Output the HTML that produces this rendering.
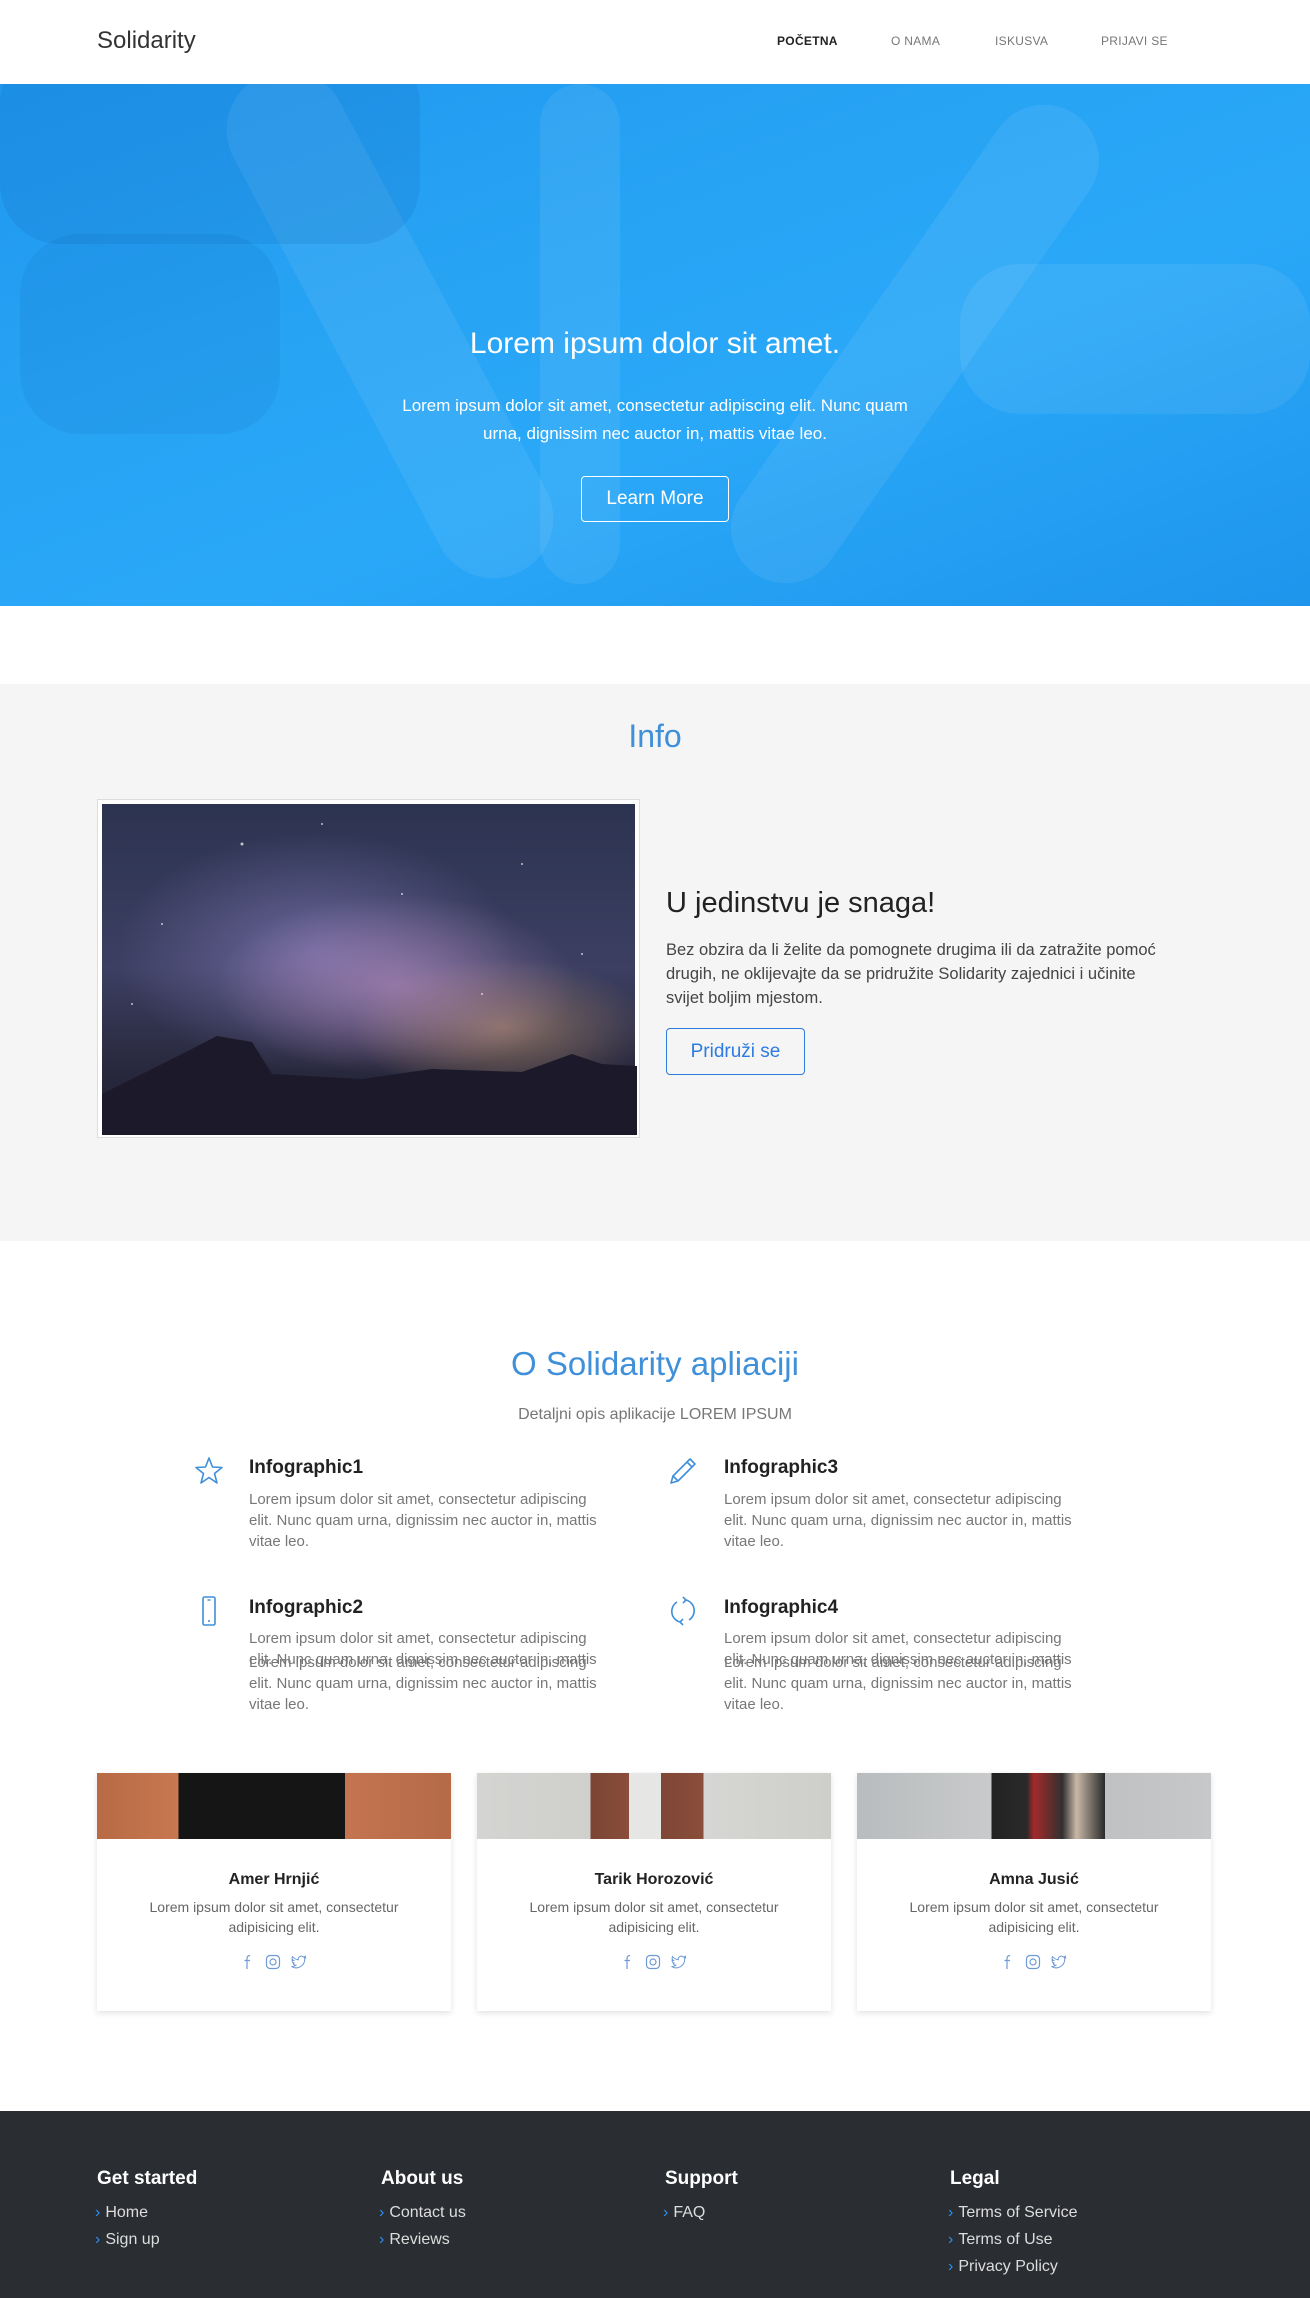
<!DOCTYPE html>
<html><head><meta charset="utf-8">
<style>
*{margin:0;padding:0;box-sizing:border-box}
body{width:1310px;height:2298px;font-family:"Liberation Sans",sans-serif;background:#fff;position:relative;overflow:hidden;color:#333}
.abs{position:absolute}
.nav{top:0;left:0;width:1310px;height:84px;background:#fff}
.logo{left:97px;top:27px;font-size:24px;color:#333}
.nl{top:34px;font-size:12px;color:#777;letter-spacing:.3px}
.hero{top:84px;left:0;width:1310px;height:522px;background:linear-gradient(160deg,#1f97ee 0%,#27a3f4 35%,#2aa8f8 60%,#1d95ec 100%);overflow:hidden}
.hero .s{position:absolute;background:rgba(255,255,255,.07);border-radius:60px}
.gray{top:684px;left:0;width:1310px;height:557px;background:#f5f5f5}
.c{text-align:center;width:1310px;left:0}
.ic{width:30px;height:30px}
.it{font-size:19px;font-weight:bold;color:#222}
.ip{font-size:15px;line-height:21px;color:#777;white-space:nowrap}
.card{top:1773px;width:354px;height:238px;background:#fff;box-shadow:0 2px 6px rgba(0,0,0,.12);text-align:center}
.card .im{height:66px;width:100%}
.card h4{margin-top:32px;font-size:16px;color:#222;font-weight:bold}
.card p{margin-top:8px;font-size:14px;line-height:20px;color:#666;padding:0 40px}
.soc{margin-top:17px;display:flex;justify-content:center;gap:10px}
.foot{top:2111px;left:0;width:1310px;height:187px;background:#2a2d31}
.fh{top:2168px;font-size:19px;font-weight:bold;color:#fff}
.fl{font-size:16px;color:#ddd;line-height:27px}
.fl b{color:#2d8ff0;font-weight:normal;margin-right:5px}
</style></head><body>
<div class="abs nav"></div>
<div class="abs logo">Solidarity</div>
<div class="abs nl" style="left:777px;color:#222;font-weight:bold">POČETNA</div>
<div class="abs nl" style="left:891px">O NAMA</div>
<div class="abs nl" style="left:995px">ISKUSVA</div>
<div class="abs nl" style="left:1101px">PRIJAVI SE</div>

<div class="abs hero">
<div class="s" style="left:330px;top:-40px;width:120px;height:560px;transform:rotate(-28deg)"></div>
<div class="s" style="left:860px;top:-20px;width:110px;height:560px;transform:rotate(35deg)"></div>
<div class="s" style="left:540px;top:0;width:80px;height:500px"></div>
<div class="s" style="left:960px;top:180px;width:350px;height:150px"></div>
<div class="s" style="left:20px;top:150px;width:260px;height:200px;background:rgba(0,40,120,.06)"></div>
<div class="s" style="left:0;top:-40px;width:420px;height:200px;background:rgba(0,40,120,.08)"></div>
</div>
<div class="abs c" style="top:327px;font-size:30px;color:#fff">Lorem ipsum dolor sit amet.</div>
<div class="abs c" style="top:392px;font-size:17px;line-height:28px;color:#fff">Lorem ipsum dolor sit amet, consectetur adipiscing elit. Nunc quam<br>urna, dignissim nec auctor in, mattis vitae leo.</div>
<div class="abs" style="left:581px;top:476px;width:148px;height:46px;border:1px solid #fff;border-radius:4px;color:#fff;font-size:19px;text-align:center;line-height:44px">Learn More</div>

<div class="abs gray"></div>
<div class="abs c" style="top:718px;font-size:32px;color:#3f8fd9">Info</div>
<div class="abs" style="left:97px;top:799px;width:543px;height:339px;background:#fff;border:1px solid #ddd;padding:4px">
<div style="width:100%;height:100%;background:radial-gradient(ellipse 180px 90px at 55% 55%,rgba(200,150,200,.55),transparent),radial-gradient(ellipse 150px 70px at 75% 68%,rgba(220,170,120,.5),transparent),radial-gradient(ellipse 200px 120px at 40% 45%,rgba(150,140,210,.5),transparent),linear-gradient(180deg,#2c3350 0%,#3c3f62 50%,#2a2a40 78%,#1e1e2e 100%);position:relative">
<svg width="535" height="331" style="position:absolute;left:0;top:0"><polygon points="0,290 60,260 80,250 115,232 150,238 170,270 260,275 330,265 420,268 470,250 500,260 535,262 535,331 0,331" fill="#1c1a2a"/><g fill="#fff" opacity=".7"><circle cx="140" cy="40" r="1.5"/><circle cx="300" cy="90" r="1"/><circle cx="60" cy="120" r="1"/><circle cx="420" cy="60" r="1"/><circle cx="480" cy="150" r="1"/><circle cx="220" cy="20" r="1"/><circle cx="30" cy="200" r="1"/><circle cx="380" cy="190" r="1"/></g></svg>
</div></div>
<div class="abs" style="left:666px;top:887px;font-size:29px;color:#222">U jedinstvu je snaga!</div>
<div class="abs" style="left:666px;top:938px;font-size:16.5px;line-height:24px;color:#444;white-space:nowrap">Bez obzira da li želite da pomognete drugima ili da zatražite pomoć<br>drugih, ne oklijevajte da se pridružite Solidarity zajednici i učinite<br>svijet boljim mjestom.</div>
<div class="abs" style="left:666px;top:1028px;width:139px;height:47px;border:1px solid #2d7be0;border-radius:4px;color:#2d7be0;font-size:19px;text-align:center;line-height:45px">Pridruži se</div>

<div class="abs c" style="top:1345px;font-size:33px;color:#3f8fd9">O Solidarity apliaciji</div>
<div class="abs c" style="top:1406px;font-size:16px;color:#777">Detaljni opis aplikacije LOREM IPSUM</div>

<svg class="abs ic" style="left:194px;top:1456px" viewBox="0 0 30 30"><polygon points="15,2 18.5,11 28,11.5 20.5,17.5 23,27 15,21.5 7,27 9.5,17.5 2,11.5 11.5,11" fill="none" stroke="#3f8fd9" stroke-width="1.6" stroke-linejoin="round"/></svg>
<div class="abs it" style="left:249px;top:1457px">Infographic1</div>
<div class="abs ip" style="left:249px;top:1489px">Lorem ipsum dolor sit amet, consectetur adipiscing<br>elit. Nunc quam urna, dignissim nec auctor in, mattis<br>vitae leo.</div>

<svg class="abs ic" style="left:668px;top:1456px" viewBox="0 0 30 30"><path d="M22 3l5 5L10 25l-7 2 2-7z M19 6l5 5 M5 20l5 5" fill="none" stroke="#3f8fd9" stroke-width="1.6" stroke-linejoin="round"/></svg>
<div class="abs it" style="left:724px;top:1457px">Infographic3</div>
<div class="abs ip" style="left:724px;top:1489px">Lorem ipsum dolor sit amet, consectetur adipiscing<br>elit. Nunc quam urna, dignissim nec auctor in, mattis<br>vitae leo.</div>

<svg class="abs ic" style="left:194px;top:1596px" viewBox="0 0 30 30"><rect x="9" y="1" width="12" height="28" rx="1.5" fill="none" stroke="#3f8fd9" stroke-width="1.6"/><circle cx="15" cy="25" r="1" fill="#3f8fd9"/><line x1="13.5" y1="4" x2="16.5" y2="4" stroke="#3f8fd9" stroke-width="1.4"/></svg>
<div class="abs it" style="left:249px;top:1597px">Infographic2</div>
<div class="abs ip" style="left:249px;top:1628px">Lorem ipsum dolor sit amet, consectetur adipiscing<br>elit. Nunc quam urna, dignissim nec auctor in, mattis</div>
<div class="abs ip" style="left:249px;top:1652px">Lorem ipsum dolor sit amet, consectetur adipiscing<br>elit. Nunc quam urna, dignissim nec auctor in, mattis<br>vitae leo.</div>

<svg class="abs ic" style="left:668px;top:1596px" viewBox="0 0 30 30"><path d="M9 6A11 11 0 0 0 12 26 M21 24A11 11 0 0 0 18 4 M15 1l3 3-3 3 M15 29l-3-3 3-3" fill="none" stroke="#3f8fd9" stroke-width="1.6"/></svg>
<div class="abs it" style="left:724px;top:1597px">Infographic4</div>
<div class="abs ip" style="left:724px;top:1628px">Lorem ipsum dolor sit amet, consectetur adipiscing<br>elit. Nunc quam urna, dignissim nec auctor in, mattis</div>
<div class="abs ip" style="left:724px;top:1652px">Lorem ipsum dolor sit amet, consectetur adipiscing<br>elit. Nunc quam urna, dignissim nec auctor in, mattis<br>vitae leo.</div>

<div class="abs card" style="left:97px"><div class="im" style="background:linear-gradient(90deg,#b86a45 0,#c7784f 23%,#151515 23%,#151515 70%,#c47450 70%,#b56a48 100%)"></div>
<h4>Amer Hrnjić</h4><p>Lorem ipsum dolor sit amet, consectetur adipisicing elit.</p>
<div class="soc"><svg width="14" height="16" viewBox="0 0 14 16"><path d="M9 1.5C7 1.5 6 2.5 6 4.5V15M3.5 6.5h5.5" fill="none" stroke="#6f9ad6" stroke-width="1.2"/></svg><svg width="16" height="16" viewBox="0 0 16 16"><rect x="1.5" y="1.5" width="13" height="13" rx="3.5" fill="none" stroke="#6f9ad6" stroke-width="1.2"/><circle cx="8" cy="8" r="3" fill="none" stroke="#6f9ad6" stroke-width="1.2"/></svg><svg width="16" height="16" viewBox="0 0 16 16"><path d="M15 3.5c-.6.3-1.2.4-1.8.5.6-.4 1-1 1.2-1.7-.6.4-1.3.6-2 .8A3 3 0 0 0 7.3 5.8 8.6 8.6 0 0 1 1.5 2.5a3 3 0 0 0 1 4 3 3 0 0 1-1.4-.4 3 3 0 0 0 2.4 3 3 3 0 0 1-1.4 0 3 3 0 0 0 2.8 2.1A6 6 0 0 1 .5 12.5 8.6 8.6 0 0 0 13.7 5V4.6c.5-.3.9-.7 1.3-1.1z" fill="none" stroke="#6f9ad6" stroke-width="1"/></svg></div></div>
<div class="abs card" style="left:477px"><div class="im" style="background:linear-gradient(90deg,#d4d4d2 0,#cfcfcc 32%,#7a4434 32%,#8a4e3a 43%,#e6e6e4 43%,#e6e6e4 52%,#7f4636 52%,#8a4e3a 64%,#d6d6d4 64%,#cececa 100%)"></div>
<h4>Tarik Horozović</h4><p>Lorem ipsum dolor sit amet, consectetur adipisicing elit.</p>
<div class="soc"><svg width="14" height="16" viewBox="0 0 14 16"><path d="M9 1.5C7 1.5 6 2.5 6 4.5V15M3.5 6.5h5.5" fill="none" stroke="#6f9ad6" stroke-width="1.2"/></svg><svg width="16" height="16" viewBox="0 0 16 16"><rect x="1.5" y="1.5" width="13" height="13" rx="3.5" fill="none" stroke="#6f9ad6" stroke-width="1.2"/><circle cx="8" cy="8" r="3" fill="none" stroke="#6f9ad6" stroke-width="1.2"/></svg><svg width="16" height="16" viewBox="0 0 16 16"><path d="M15 3.5c-.6.3-1.2.4-1.8.5.6-.4 1-1 1.2-1.7-.6.4-1.3.6-2 .8A3 3 0 0 0 7.3 5.8 8.6 8.6 0 0 1 1.5 2.5a3 3 0 0 0 1 4 3 3 0 0 1-1.4-.4 3 3 0 0 0 2.4 3 3 3 0 0 1-1.4 0 3 3 0 0 0 2.8 2.1A6 6 0 0 1 .5 12.5 8.6 8.6 0 0 0 13.7 5V4.6c.5-.3.9-.7 1.3-1.1z" fill="none" stroke="#6f9ad6" stroke-width="1"/></svg></div></div>
<div class="abs card" style="left:857px"><div class="im" style="background:linear-gradient(90deg,#b9bcbe 0,#c8cacb 38%,#222 38%,#2a2a2a 48%,#a52a2a 50%,#303030 58%,#c9b8a8 62%,#2a2a2a 70%,#bfc1c2 70%,#c6c8c9 100%)"></div>
<h4>Amna Jusić</h4><p>Lorem ipsum dolor sit amet, consectetur adipisicing elit.</p>
<div class="soc"><svg width="14" height="16" viewBox="0 0 14 16"><path d="M9 1.5C7 1.5 6 2.5 6 4.5V15M3.5 6.5h5.5" fill="none" stroke="#6f9ad6" stroke-width="1.2"/></svg><svg width="16" height="16" viewBox="0 0 16 16"><rect x="1.5" y="1.5" width="13" height="13" rx="3.5" fill="none" stroke="#6f9ad6" stroke-width="1.2"/><circle cx="8" cy="8" r="3" fill="none" stroke="#6f9ad6" stroke-width="1.2"/></svg><svg width="16" height="16" viewBox="0 0 16 16"><path d="M15 3.5c-.6.3-1.2.4-1.8.5.6-.4 1-1 1.2-1.7-.6.4-1.3.6-2 .8A3 3 0 0 0 7.3 5.8 8.6 8.6 0 0 1 1.5 2.5a3 3 0 0 0 1 4 3 3 0 0 1-1.4-.4 3 3 0 0 0 2.4 3 3 3 0 0 1-1.4 0 3 3 0 0 0 2.8 2.1A6 6 0 0 1 .5 12.5 8.6 8.6 0 0 0 13.7 5V4.6c.5-.3.9-.7 1.3-1.1z" fill="none" stroke="#6f9ad6" stroke-width="1"/></svg></div></div>

<div class="abs foot"></div>
<div class="abs fh" style="left:97px">Get started</div>
<div class="abs fh" style="left:381px">About us</div>
<div class="abs fh" style="left:665px">Support</div>
<div class="abs fh" style="left:950px">Legal</div>
<div class="abs fl" style="left:95px;top:2199px"><b>›</b>Home<br><b>›</b>Sign up</div>
<div class="abs fl" style="left:379px;top:2199px"><b>›</b>Contact us<br><b>›</b>Reviews</div>
<div class="abs fl" style="left:663px;top:2199px"><b>›</b>FAQ</div>
<div class="abs fl" style="left:948px;top:2199px"><b>›</b>Terms of Service<br><b>›</b>Terms of Use<br><b>›</b>Privacy Policy</div>
</body></html>
